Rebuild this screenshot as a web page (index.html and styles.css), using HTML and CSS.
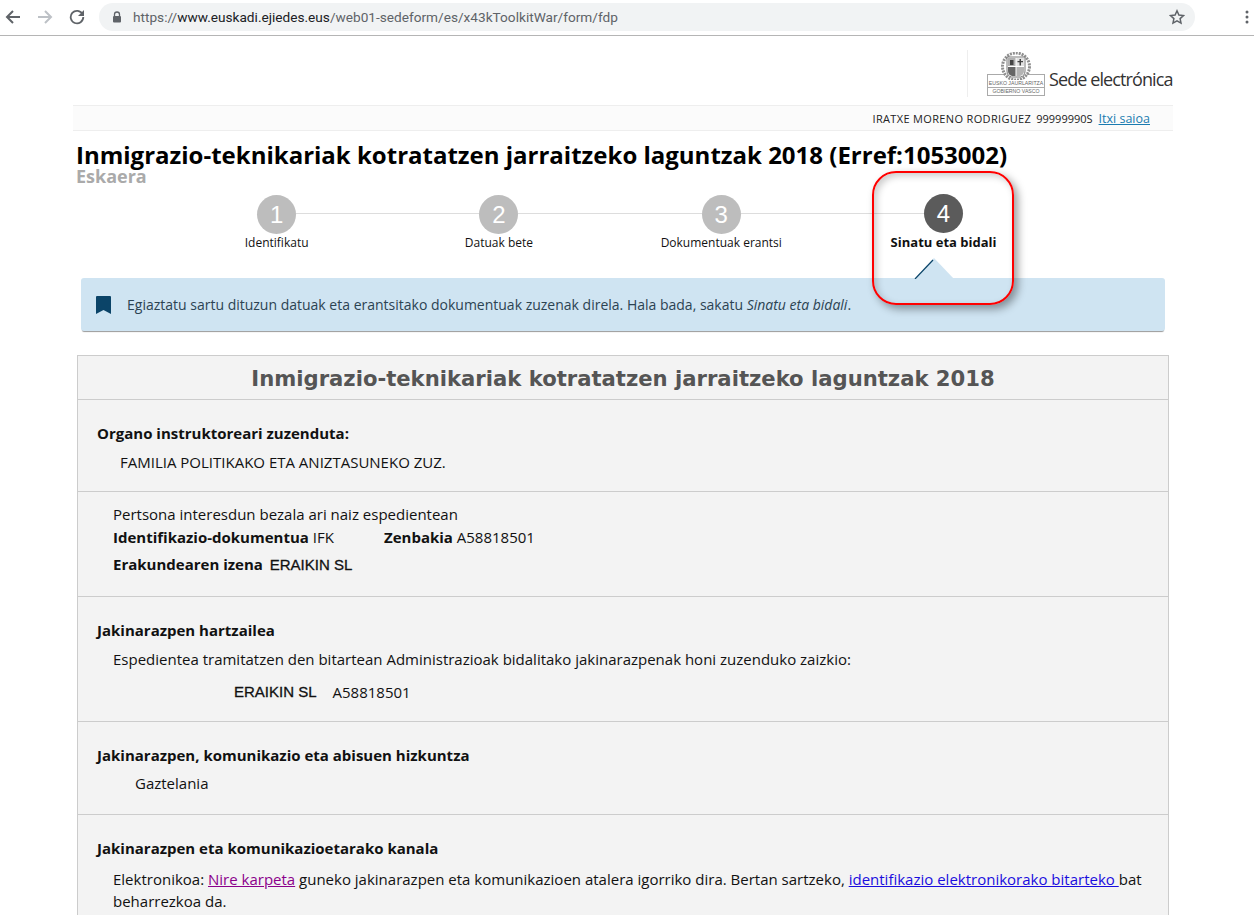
FILE: index.html
```html
<!DOCTYPE html>
<html lang="eu">
<head>
<meta charset="utf-8">
<title>Inmigrazio-teknikariak</title>
<link rel="stylesheet" href="styles.css">
</head>
<body>
<div class="browser">
  <svg class="nav-icon first" width="16" height="16" viewBox="0 0 16 16"><path d="M15 8H2M8 2L2 8l6 6" fill="none" stroke="#5f6368" stroke-width="2"/></svg>
  <svg class="nav-icon" width="16" height="16" viewBox="0 0 16 16"><path d="M1 8h13M8 2l6 6-6 6" fill="none" stroke="#bdc1c6" stroke-width="2"/></svg>
  <svg class="nav-icon" width="16" height="16" viewBox="0 0 16 16"><path d="M13.6 5.2A6.3 6.3 0 1 0 14.3 8" fill="none" stroke="#5f6368" stroke-width="1.8"/><path d="M15 1v6H9z" fill="#5f6368"/></svg>
  <div class="omnibox">
    <svg class="lock" width="10" height="12" viewBox="0 0 10 12"><path d="M2.5 5V3.5a2.5 2.5 0 0 1 5 0V5" fill="none" stroke="#5f6368" stroke-width="1.3"/><rect x="1" y="5" width="8" height="6.5" rx="1" fill="#5f6368"/></svg>
    <span class="url"><span class="scheme">https://</span><span class="host">www.euskadi.ejiedes.eus</span><span class="scheme">/web01-sedeform/es/x43kToolkitWar/form/fdp</span></span>
    <svg class="star" width="16" height="16" viewBox="0 0 16 16"><path d="M8 1.8l1.9 4.2 4.6.5-3.4 3.1.9 4.5-4-2.3-4 2.3.9-4.5L1.500 6.500l4.600-.5z" fill="none" stroke="#5f6368" stroke-width="1.500"/></svg>
  </div>
  <svg class="menu" width="4" height="16" viewBox="0 0 4 16"><circle cx="2" cy="3" r="1.500" fill="#5f6368"/><circle cx="2" cy="8" r="1.500" fill="#5f6368"/><circle cx="2" cy="13" r="1.500" fill="#5f6368"/></svg>
</div>

<div class="page">
  <header class="brand">
    <div class="brand-inner">
      <div class="logo">
        <svg class="crest" width="32" height="28" viewBox="0 0 32 28">
          <circle cx="16" cy="14.500" r="13.500" fill="#fff" stroke="#8f8f8f" stroke-width="3" stroke-dasharray="2 1"/>
          <path d="M7 5h18v14q0 5-4.500 6h-9Q7 24 7 19z" fill="#fff" stroke="#777"/>
          <path d="M8 6h7.500v8H8z" fill="#b0b0b0"/>
          <path d="M16.500 6H24v8h-7.500z" fill="#e2e2e2"/>
          <path d="M10 8h3.500v5H10zM19.500 7h1.500v6.500h-1.500zM17.500 9h5.500v1.300h-5.500z" fill="#444"/>
          <path d="M8 15h7.500v9H12q-4-1-4-5z" fill="#666"/>
          <path d="M16.500 15H24v4q0 4-4 5h-3.500z" fill="#b4b4b4"/>
        </svg>
        <div class="logo-text"><span>EUSKO JAURLARITZA</span><span>GOBIERNO VASCO</span></div>
      </div>
      <span class="brand-name">Sede electrónica</span>
    </div>
  </header>
  <div class="userbar">
    <span class="user">IRATXE MORENO RODRIGUEZ</span>
    <span class="dni">99999990S</span>
    <a class="logout" href="#">Itxi saioa</a>
  </div>

  <h1 class="title">Inmigrazio-teknikariak kotratatzen jarraitzeko laguntzak 2018 (Erref:1053002)</h1>
  <div class="subtitle">Eskaera</div>

  <ol class="steps">
    <li class="step"><span class="dot">1</span><span class="label">Identifikatu</span></li>
    <li class="step"><span class="dot">2</span><span class="label">Datuak bete</span></li>
    <li class="step"><span class="dot">3</span><span class="label">Dokumentuak erantsi</span></li>
    <li class="step current"><span class="dot">4</span><span class="label">Sinatu eta bidali</span></li>
  </ol>

  <div class="notice">
    <svg class="bookmark" width="15" height="18" viewBox="0 0 15 18"><path d="M0 1a1 1 0 0 1 1-1h13a1 1 0 0 1 1 1v17l-7.500-4L0 18z" fill="#0b4468"/></svg>
    <p>Egiaztatu sartu dituzun datuak eta erantsitako dokumentuak zuzenak direla. Hala bada, sakatu <em>Sinatu eta bidali</em>.</p>
    <svg class="pointer" width="40" height="21" viewBox="0 0 40 21"><path d="M0 21L20 0l20 21z" fill="#cfe4f2"/><path d="M1 21L19 2" fill="none" stroke="#0b4468" stroke-width="1.200"/></svg>
    <div class="callout"></div>
  </div>

  <section class="form">
    <h2 class="form-title">Inmigrazio-teknikariak kotratatzen jarraitzeko laguntzak 2018</h2>
    <div class="block b1">
      <h3>Organo instruktoreari zuzenduta:</h3>
      <p class="organ">FAMILIA POLITIKAKO ETA ANIZTASUNEKO ZUZ.</p>
    </div>
    <div class="block b2">
      <p>Pertsona interesdun bezala ari naiz espedientean</p>
      <p class="id-row"><span class="id-doc"><b>Identifikazio-dokumentua</b> IFK</span><span><b>Zenbakia</b> A58818501</span></p>
      <p class="org-row"><b>Erakundearen izena</b> <span class="caps">ERAIKIN SL</span></p>
    </div>
    <div class="block b3">
      <h3>Jakinarazpen hartzailea</h3>
      <p class="indent">Espedientea tramitatzen den bitartean Administrazioak bidalitako jakinarazpenak honi zuzenduko zaizkio:</p>
      <p class="recipient"><span class="caps">ERAIKIN SL</span><span class="nif">A58818501</span></p>
    </div>
    <div class="block b4">
      <h3>Jakinarazpen, komunikazio eta abisuen hizkuntza</h3>
      <p class="lang">Gaztelania</p>
    </div>
    <div class="block b5">
      <h3>Jakinarazpen eta komunikazioetarako kanala</h3>
      <p class="indent">Elektronikoa: <a class="visited" href="#">Nire karpeta</a> guneko jakinarazpen eta komunikazioen atalera igorriko dira. Bertan sartzeko, <a class="link" href="#">identifikazio elektronikorako bitarteko </a> bat beharrezkoa da.</p>
    </div>
  </section>
</div>
</body>
</html>
```
FILE: styles.css
```css
* { box-sizing: border-box; }
html, body { margin: 0; padding: 0; height: 915px; overflow: hidden; background: #fff; }
body { font-family: "Open Sans", sans-serif; color: #111; font-size: 15px; }

.browser { height: 36px; display: flex; align-items: center; border-bottom: 1px solid #b5b5b5; background: #fff; padding-left: 5px; padding-bottom: 1px; }
.nav-icon { margin-right: 16px; flex: none; }
.omnibox { width: 1096px; height: 28px; margin-left: -2px; border-radius: 14px; background: #f1f3f4; display: flex; align-items: center; padding: 0 10px 0 13px; }
.lock { flex: none; margin-right: 11px; }
.url { font-family: "Roboto", sans-serif; font-size: 13.650px; flex: 1; white-space: nowrap; }
.scheme { color: #5f6368; }
.host { color: #202124; }
.menu { margin-left: 50px; flex: none; }

.page { width: 1100px; margin-left: 73px; position: relative; }
.brand { height: 69px; display: flex; justify-content: flex-end; padding-top: 14px; }
.brand-inner { width: 206px; height: 47px; border-left: 1px solid #eee; display: flex; align-items: flex-start; padding-left: 19px; gap: 4px; }
.logo { width: 58px; display: flex; flex-direction: column; align-items: center; margin-top: 2px; }
.crest { display: block; margin-bottom: -6px; position: relative; z-index: 1; }
.logo-text { width: 58px; height: 22px; border: 1px solid #aaa; display: flex; flex-direction: column; background: #fff; padding-top: 5px; }
.logo-text span { font-family: "Liberation Sans", sans-serif; font-size: 5.200px; line-height: 7px; height: 8px; text-align: center; color: #666; white-space: nowrap; }
.logo-text span + span { border-top: 1px solid #aaa; }
.brand-name { font-size: 18px; letter-spacing: -0.900px; color: #333; line-height: 24px; margin-top: 17px; white-space: nowrap; }

.userbar { height: 26px; background: #fbfbfb; border-top: 1px solid #eee; border-bottom: 1px solid #eee; display: flex; align-items: center; justify-content: flex-end; padding-right: 23px; font-size: 11px; }
.user { letter-spacing: .340px; color: #222; }
.dni { margin-left: 5px; font-size: 11px; color: #222; }
.logout { margin-left: 6px; color: #1a7bb0; font-size: 12.500px; }

.title { margin: 9px 0 0 3px; font-size: 24px; line-height: 30px; font-weight: 700; color: #000; white-space: nowrap; }
.subtitle { margin: -4px 0 0 3px; font-size: 18px; line-height: 20px; font-weight: 700; color: #aaa; }

.steps { list-style: none; margin: 9px 0 0 92.500px; padding: 0; display: flex; position: relative; width: 889.200px; height: 83px; }
.steps::before { content: ""; position: absolute; left: 111px; right: 111px; top: 18px; height: 1px; background: #ddd; }
.step { width: 222.300px; display: flex; flex-direction: column; align-items: center; position: relative; font-size: 12px; }
.dot { width: 39px; height: 39px; border-radius: 50%; background: #bdbdbd; color: #fff; font-family: "Liberation Sans", sans-serif; font-size: 24px; display: flex; align-items: center; justify-content: center; }
.label { margin-top: 1px; line-height: 16px; white-space: nowrap; color: #111; }
.current .dot { background: #5b5b5b; margin-top: -1px; }
.current .label { font-weight: 700; font-size: 13px; color: #111; margin-top: 1px; }

.notice { margin: 0 8px; height: 53px; background: #cfe4f2; border-radius: 3px; box-shadow: 0 2px 1px -1px rgba(0,0,0,.4); display: flex; align-items: center; position: relative; padding-left: 15px; color: #2c4352; }
.notice p { margin: 0 0 0 16px; font-size: 14px; white-space: nowrap; }
.bookmark { flex: none; }
.pointer { position: absolute; left: 833px; top: -20px; }
.callout { position: absolute; left: 791px; top: -107px; width: 142px; height: 134px; border: 2px solid #f00; border-radius: 24px; box-shadow: 4px 4px 8px rgba(0,0,0,.38), inset 3px 3px 7px rgba(0,0,0,.2); }

.form { margin: 24px 4px 0; background: #f3f3f3; border: 1px solid #ccc; border-bottom: 0; height: 700px; }
.form-title { margin: 0; height: 44px; font-family: "DejaVu Sans", sans-serif; font-size: 21.150px; line-height: 46px; color: #555; text-align: center; font-weight: 700; border-bottom: 1px solid #ccc; }
.block { border-bottom: 1px solid #ccc; padding-left: 19px; }
.block h3 { margin: 0; font-size: 15px; line-height: 20px; font-weight: 700; color: #111; }
.block p { margin: 0; font-size: 15px; line-height: 20px; }
.b1 { height: 92px; padding-top: 23px; }
.organ { padding-left: 23px; margin-top: 9px !important; }
.b2 { height: 105px; padding-top: 12px; padding-left: 35px; }
.id-row { display: flex; margin-top: 3px !important; }
.id-doc { width: 271px; }
.org-row { margin-top: 7px !important; }
.caps { font-family: "Liberation Sans", sans-serif; font-weight: 400; -webkit-text-stroke: .3px #111; margin-left: 3px; }
.b3 { height: 125px; padding-top: 23px; }
.indent { padding-left: 16px; }
.b3 .indent { margin-top: 9px; }
.recipient { padding-left: 134px; margin-top: 13px !important; display: flex; }
.nif { margin-left: 16px; }
.b4 { height: 93px; padding-top: 23px; }
.lang { padding-left: 38px; margin-top: 8px !important; }
.b5 { border-bottom: 0; padding-top: 23px; padding-right: 20px; }
.b5 .indent { margin-top: 10px; line-height: 22px; }
.visited { color: #8b008b; }
.link { color: #1a0dde; }
```
